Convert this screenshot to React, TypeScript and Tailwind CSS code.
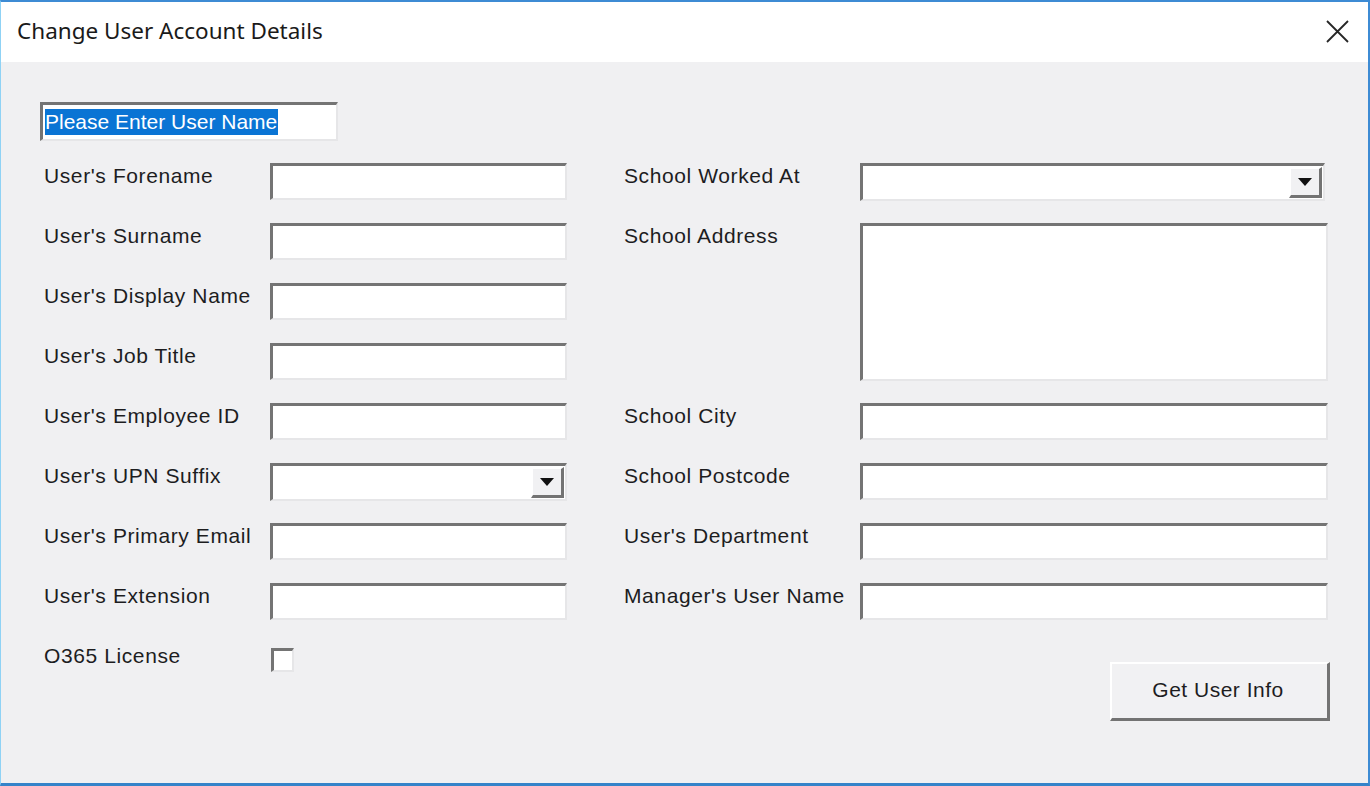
import React from 'react'

const sunken =
  'bg-white border-t-[3px] border-l-[3px] border-t-[#747474] border-l-[#747474] border-b-2 border-r-2 border-b-[#e6e6e8] border-r-[#e6e6e8]'

const raised =
  'bg-[#f1f1f3] border-t-2 border-l-2 border-t-white border-l-white border-b-[3px] border-r-[3px] border-b-[#737373] border-r-[#737373]'

function TextBox({ width, height = 37 }: { width: number; height?: number }) {
  return <div className={sunken} style={{ width, height }} />
}

function ComboBox({ width }: { width: number }) {
  return (
    <div className={`${sunken} flex justify-end items-stretch pr-px py-px`} style={{ width, height: 38 }}>
      <div className={`${raised} w-[33px] flex items-center justify-center`}>
        <svg width="14" height="8" viewBox="0 0 14 8">
          <path d="M0 0 H14 L7 8 Z" fill="#111" />
        </svg>
      </div>
    </div>
  )
}

function Row({
  label,
  labelWidth,
  children,
  height = 60,
}: {
  label: string
  labelWidth: number
  children: React.ReactNode
  height?: number
}) {
  return (
    <div className="flex items-start" style={{ height }}>
      <span className="pt-[1px] leading-6 whitespace-nowrap shrink-0 tracking-[0.6px]" style={{ width: labelWidth }}>
        {label}
      </span>
      {children}
    </div>
  )
}

const leftFields = [
  "User's Forename",
  "User's Surname",
  "User's Display Name",
  "User's Job Title",
  "User's Employee ID",
]

export default function App() {
  return (
    <div className="w-[1370px] h-[786px] flex flex-col bg-[#f0f0f2] border-t-2 border-r-2 border-b-[3px] border-l border-t-[#3d8bd4] border-r-[#3d8bd4] border-b-[#3483c9] border-l-[#8fd2f5] font-['Liberation_Sans',Arial,sans-serif] text-[21px] text-[#1d1d1f] overflow-hidden">
      {/* title bar */}
      <div className="h-[60px] bg-white flex items-center justify-between pl-4 pr-[19px] shrink-0">
        <span className="font-['Noto_Sans',sans-serif] text-[22.5px] text-[#1a1a1a] pb-[2px]">Change User Account Details</span>
        <svg width="23" height="23" viewBox="0 0 23 23" className="mt-[-1px]">
          <path d="M1 1 L22 22 M22 1 L1 22" stroke="#262626" strokeWidth="1.8" />
        </svg>
      </div>

      <div className="flex-1 pl-[39px] pt-[40px]">
        {/* user name lookup box */}
        <div className={`${sunken} w-[298px] h-[39px] flex items-center pl-[2px]`}>
          <span className="bg-[#0a74d4] text-white leading-[26px] pr-px">Please Enter User Name</span>
        </div>

        <div className="flex mt-[22px]">
          {/* left column */}
          <div className="pl-[4px] w-[584px] shrink-0">
            {leftFields.map((l) => (
              <Row key={l} label={l} labelWidth={226}>
                <TextBox width={297} />
              </Row>
            ))}
            <Row label="User's UPN Suffix" labelWidth={226}>
              <ComboBox width={297} />
            </Row>
            {["User's Primary Email", "User's Extension"].map((l) => (
              <Row key={l} label={l} labelWidth={226}>
                <TextBox width={297} />
              </Row>
            ))}
            <Row label="O365 License" labelWidth={227}>
              <div className={`${sunken} w-[23px] h-[24px] mt-[5px]`} />
            </Row>
          </div>

          {/* right column */}
          <div className="w-[704px] shrink-0">
            <Row label="School Worked At" labelWidth={236}>
              <ComboBox width={465} />
            </Row>
            <Row label="School Address" labelWidth={236} height={180}>
              <TextBox width={468} height={158} />
            </Row>
            {['School City', 'School Postcode', "User's Department", "Manager's User Name"].map((l) => (
              <Row key={l} label={l} labelWidth={236}>
                <TextBox width={468} />
              </Row>
            ))}
            <div className="flex justify-end mt-[19px] mr-[-2px]">
              <button className={`${raised} w-[220px] h-[59px] text-[21px] tracking-[0.5px] text-[#1d1d1f] pb-[2px] pr-[3px]`}>
                Get User Info
              </button>
            </div>
          </div>
        </div>
      </div>
    </div>
  )
}
